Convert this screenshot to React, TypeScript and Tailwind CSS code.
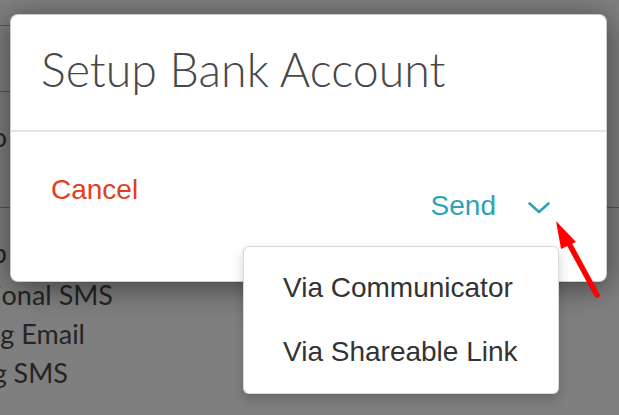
import React from "react";

const lato = { fontFamily: "Lato, 'Noto Sans', sans-serif" };
const arial = { fontFamily: "'Liberation Sans', Arial, sans-serif" };

export default function App() {
  return (
    <div className="relative w-[619px] h-[415px] overflow-hidden bg-white" style={lato}>
      {/* background page */}
      <div className="flex flex-col text-[27px] text-[#4a4a4a]">
        <div className="h-[25px]" />
        <div className="h-[66px] w-[300px] border-t border-[#aaa]" />
        <div className="h-[116px] w-[300px] border-t border-[#aaa] flex flex-col">
          <div className="h-[30px]" />
          <div className="w-[7px] flex justify-end whitespace-nowrap leading-[30px]">Info</div>
        </div>
        <div className="h-[68px] border-t border-[#aaa] flex flex-col">
          <div className="h-[30px]" />
          <div className="w-[7px] flex justify-end whitespace-nowrap leading-[30px]">Setup</div>
        </div>
        <div className="w-[113px] flex justify-end whitespace-nowrap leading-[39px]">Transactional SMS</div>
        <div className="w-[85px] flex justify-end whitespace-nowrap leading-[39px]">Marketing Email</div>
        <div className="w-[68px] flex justify-end whitespace-nowrap leading-[39px]">Marketing SMS</div>
      </div>

      {/* overlay */}
      <div className="absolute inset-0 bg-black/50" />

      {/* modal */}
      <div className="absolute left-[10px] top-[14px] w-[597px] h-[268px] bg-white rounded-[8px] border border-black/20 shadow-[0_5px_30px_rgba(0,0,0,0.5)] flex flex-col">
        <div className="h-[117px] pl-[30px] pt-[31px] border-b-2 border-[#e5e5e5]">
          <div className="text-[46.5px] leading-[46px] font-light text-[#484848]" style={lato}>Setup Bank Account</div>
        </div>
        <div className="relative flex-1 flex items-start px-[40px]" style={arial}>
          <div className="mt-[44px] text-[28px] leading-[28px] text-[#e2401c]">Cancel</div>
          <div className="ml-auto mt-[60px] mr-[16px] flex items-center text-[28px] leading-[28px] text-[#2fa2b7]">
            <span>Send</span>
            <svg className="ml-[32px] mt-[4px]" width="22" height="12" viewBox="0 0 22 12" fill="none">
              <path d="M1.5 1.5 L11 10 L20.5 1.5" stroke="#2fa2b7" strokeWidth="2.6" strokeLinecap="round" strokeLinejoin="round" />
            </svg>
          </div>

          {/* dropdown menu */}
          <div className="absolute left-[232px] top-[114px] w-[316px] h-[148px] bg-white rounded-[6px] border border-black/15 shadow-[0_6px_12px_rgba(0,0,0,0.18)] flex flex-col pl-[39px] pt-[27px] gap-[36px] text-[28px] leading-[28px] text-[#333]">
            <div>Via Communicator</div>
            <div>Via Shareable Link</div>
          </div>
        </div>
      </div>

      {/* red annotation arrow */}
      <svg className="absolute left-0 top-0 pointer-events-none" width="619" height="415" viewBox="0 0 619 415">
        <line x1="597" y1="295" x2="566" y2="238" stroke="#ff0000" strokeWidth="5.5" strokeLinecap="round" />
        <polygon points="556,221 576,242 561,249" fill="#ff0000" />
      </svg>
    </div>
  );
}
